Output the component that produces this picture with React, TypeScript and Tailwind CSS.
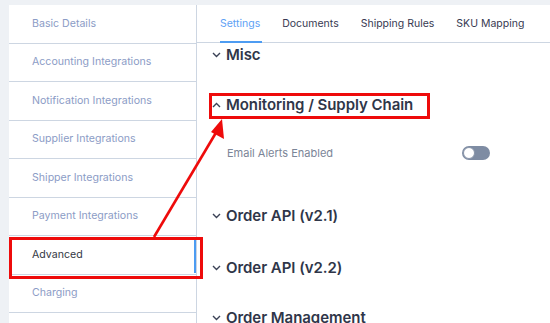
import React from "react";

const font = { fontFamily: "Inter, 'Open Sans', 'Liberation Sans', sans-serif" };

function Chevron({ up }: { up?: boolean }) {
  return (
    <svg width="9" height="6" viewBox="0 0 9 6" className="shrink-0">
      {up ? (
        <polyline points="1,5 4.5,1.5 8,5" fill="none" stroke="#3b4256" strokeWidth="1.4" />
      ) : (
        <polyline points="1,1 4.5,4.5 8,1" fill="none" stroke="#3b4256" strokeWidth="1.4" />
      )}
    </svg>
  );
}

function Heading({ title, up }: { title: string; up?: boolean }) {
  return (
    <div className="h-[24px] flex items-center gap-[5px] pl-[15px]">
      <Chevron up={up} />
      <span className="text-[15px] font-semibold text-[#2f3649] tracking-[-0.05px]">{title}</span>
    </div>
  );
}

const items = [
  "Basic Details",
  "Accounting Integrations",
  "Notification Integrations",
  "Supplier Integrations",
  "Shipper Integrations",
  "Payment Integrations",
  "Advanced",
  "Charging",
];

export default function App() {
  return (
    <div className="relative w-[550px] h-[323px] overflow-hidden bg-[#eef1f5] pt-[5px] pl-[9px] flex" style={font}>
      <div className="w-[188px] shrink-0 bg-white border-r border-[#cdd6e2] flex flex-col">
        {items.map((it) => (
          <div
            key={it}
            className="relative h-[38.5px] shrink-0 border-b border-[#cdd6e2] flex items-center pl-[23px] text-[10.6px]"
          >
            <span className={it === "Advanced" ? "text-[#333844]" : "text-[#8c9cc6]"}>{it}</span>
            {it === "Advanced" && (
              <span className="absolute right-0 top-[1px] bottom-[1px] w-[2px] bg-[#4d9cf2]" />
            )}
          </div>
        ))}
      </div>
      <div className="flex-1 bg-white flex flex-col">
        <div className="h-[38px] shrink-0 border-b border-[#cdd6e2] flex items-stretch pl-[23px] gap-[22px] text-[10.5px] text-[#383a52]">
          <div className="relative flex items-center text-[#5ea1f5]">
            Settings
            <span className="absolute left-0 -right-[2px] bottom-[-1px] h-[2px] bg-[#4d9cf2]" />
          </div>
          <div className="flex items-center">Documents</div>
          <div className="flex items-center">Shipping Rules</div>
          <div className="flex items-center">SKU Mapping</div>
        </div>
        <div className="flex flex-col">
          <div className="h-[50px] shrink-0">
            <Heading title="Misc" />
          </div>
          <div className="h-[111px] shrink-0 flex flex-col">
            <Heading title="Monitoring / Supply Chain" up />
            <div className="mt-[26px] h-[20px] flex items-center pl-[30px] pr-[60px] justify-between">
              <span className="text-[11px] text-[#7b8597]">Email Alerts Enabled</span>
              <div className="w-[28px] h-[14px] rounded-full bg-[#7e8ca3] relative">
                <span className="absolute left-[1px] top-[1px] w-[12px] h-[12px] rounded-full bg-white border border-[#8a96aa]" />
              </div>
            </div>
          </div>
          <div className="h-[52px] shrink-0">
            <Heading title="Order API (v2.1)" />
          </div>
          <div className="h-[50px] shrink-0">
            <Heading title="Order API (v2.2)" />
          </div>
          <div className="h-[50px] shrink-0">
            <Heading title="Order Management" />
          </div>
        </div>
      </div>

      {/* annotation overlays */}
      <div className="absolute left-[9px] top-[237px] w-[194px] h-[42px] border-[3px] border-[#ee0b0b]" />
      <div className="absolute left-[209px] top-[93px] w-[221px] h-[26px] border-[3px] border-[#ee0b0b]" />
      <svg className="absolute left-0 top-0" width="550" height="323">
        <line x1="154" y1="237" x2="217" y2="131" stroke="#ee0b0b" strokeWidth="2.6" />
        <polygon points="222,119 211,132 224,139" fill="#ee0b0b" />
      </svg>
    </div>
  );
}
